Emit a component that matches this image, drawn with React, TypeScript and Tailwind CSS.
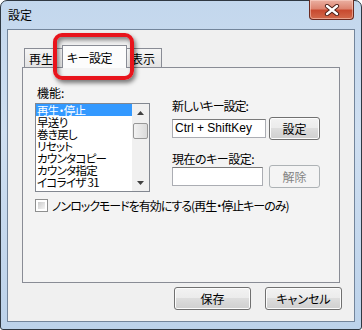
import React from "react";

const items = ["再生・停止", "早送り", "巻き戻し", "リセット", "カウンタコピー", "カウンタ指定", "イコライザ 31"];

const font = "[font-family:'Noto_Sans_CJK_JP',sans-serif] [font-feature-settings:'palt']";

function Button({ label, width, disabled }: { label: string; width: string; disabled?: boolean }) {
  return (
    <div
      className={`${width} flex h-[23px] items-center justify-center rounded-[3px] border text-[12px] leading-[13px] ${
        disabled
          ? "border-[#adb2b5] bg-[#f4f4f4] text-[#838383]"
          : "border-[#707070] bg-[linear-gradient(to_bottom,#f2f2f2_0%,#ebebeb_50%,#dddddd_50%,#cfcfcf_100%)] text-black shadow-[inset_0_0_0_1px_#fcfcfc]"
      }`}
    >
      {label}
    </div>
  );
}

function CloseButton() {
  return (
    <div className="absolute right-[7px] top-[-1px] flex h-[20px] w-[45px] items-center justify-center rounded-b-[4px] border border-t-0 border-[#6b2a20] bg-[linear-gradient(to_bottom,#eab0a2_0%,#dd8571_45%,#c84a30_55%,#d26a4c_100%)] shadow-[inset_0_0_0_1px_rgba(255,220,210,0.5)]">
      <svg width="16" height="12" viewBox="0 0 16 12">
        <path d="M3 2 L13 10 M13 2 L3 10" stroke="#4a1d16" strokeWidth="4.2" strokeLinecap="round" />
        <path d="M3 2 L13 10 M13 2 L3 10" stroke="#ffffff" strokeWidth="2.4" strokeLinecap="round" />
      </svg>
    </div>
  );
}

export default function App() {
  return (
    <div className={`h-[330px] w-[362px] bg-white text-black ${font}`}>
      <div className="relative flex h-full flex-col rounded-t-[7px] rounded-b-[3px] border border-[#2f3842] bg-[linear-gradient(to_bottom,#c3d7ed_0%,#cfdff1_40%,#bcd2ea_100%)]">
        <div className="h-[28px] pl-[7px] pt-[7px] text-[12px] leading-[13px]">設定</div>
        <CloseButton />

        <div className="mx-[6px] mb-[7px] flex flex-1 flex-col border border-[#73859b] bg-[#f0f0f0]">
          {/* tabs */}
          <div className="mt-[15px] flex h-[22px] items-end pl-[16px] text-[12px] leading-[13px]">
            <div className="flex h-[19px] w-[39px] items-center border border-b-0 border-[#898c95] bg-[linear-gradient(to_bottom,#f5f5f5,#e3e3e3)] pl-[4px]">
              再生
            </div>
            <div className="relative z-10 -mb-px -ml-px flex h-[23px] w-[65px] items-center border border-b-0 border-[#898c95] bg-[#fcfcfc] pl-[4px] tracking-[-0.5px]">
              キー設定
            </div>
            <div className="-ml-px flex h-[19px] w-[36px] items-center border border-b-0 border-[#898c95] bg-[linear-gradient(to_bottom,#f5f5f5,#e3e3e3)] pl-[4px]">
              表示
            </div>
          </div>

          <div className="mx-[14px] flex h-[216px] flex-col border border-[#898c95] bg-[#f3f3f3] pl-[12px] pt-[18px] text-[12px] leading-[13px]">
            <div className="flex">
              <div className="flex flex-col">
                <div className="ml-[2px] h-[13px]">機能:</div>
                <div className="mt-[4px] flex h-[89px] w-[115px] border border-[#828790] bg-white">
                  <div className="flex flex-1 flex-col">
                    {items.map((item, i) => (
                      <div
                        key={item}
                        className={`h-[12px] whitespace-nowrap pl-[1px] text-[11.5px] leading-[12px] tracking-[-0.7px] ${
                          i === 0 ? "bg-[#3399ff] text-white" : ""
                        }`}
                      >
                        {item}
                      </div>
                    ))}
                  </div>
                  <div className="flex w-[17px] flex-col items-center bg-[#f0f0f0]">
                    <div className="flex h-[17px] items-center justify-center">
                      <svg width="7" height="4" viewBox="0 0 7 4">
                        <path d="M0 4 L3.5 0 L7 4 Z" fill="#404040" />
                      </svg>
                    </div>
                    <div className="mt-[2px] h-[16px] w-[15px] rounded-[2px] border border-[#979797] bg-[linear-gradient(to_right,#f2f2f2,#dadada)]" />
                    <div className="flex-1" />
                    <div className="flex h-[17px] items-center justify-center">
                      <svg width="7" height="4" viewBox="0 0 7 4">
                        <path d="M0 0 L7 0 L3.5 4 Z" fill="#404040" />
                      </svg>
                    </div>
                  </div>
                </div>
              </div>

              <div className="ml-[22px] flex flex-col pt-[13px]">
                <div className="h-[13px] tracking-[-1px]">新しいキー設定:</div>
                <div className="mt-[5px] flex items-center">
                  <div className="flex h-[19px] w-[94px] items-center border border-[#abadb3] border-t-[#7a7a7a] bg-white pl-[2px] [font-family:'Liberation_Sans',sans-serif]">
                    Ctrl + ShiftKey
                  </div>
                  <div className="ml-[3px]">
                    <Button label="設定" width="w-[51px]" />
                  </div>
                </div>
                <div className="mt-[12px] h-[13px] tracking-[-0.5px]">現在のキー設定:</div>
                <div className="flex items-center">
                  <div className="h-[19px] w-[91px] border border-[#abadb3] border-t-[#7a7a7a] bg-white" />
                  <div className="ml-[6px]">
                    <Button label="解除" width="w-[51px]" disabled />
                  </div>
                </div>
              </div>
            </div>

            <div className="mt-[7px] flex items-center">
              <div className="h-[13px] w-[13px] border border-[#8e8f8f] bg-white p-[2px]">
                <div className="h-full w-full bg-[linear-gradient(135deg,#cbcbcb,#f4f4f4)]" />
              </div>
              <div className="ml-[4px] whitespace-nowrap tracking-[-1px]">ノンロックモードを有効にする(再生・停止キーのみ)</div>
            </div>
          </div>

          <div className="mr-[12px] mt-[4px] flex justify-end gap-[14px]">
            <Button label="保存" width="w-[77px]" />
            <Button label="キャンセル" width="w-[77px]" />
          </div>
        </div>

        {/* red highlight around the tab */}
        <div className="pointer-events-none absolute left-[52px] top-[32px] h-[47px] w-[81px] rounded-[9px] border-[4px] border-[#e8141c] shadow-[2px_3px_4px_rgba(0,0,0,0.5),inset_2px_3px_4px_rgba(0,0,0,0.45)]" />
      </div>
    </div>
  );
}
